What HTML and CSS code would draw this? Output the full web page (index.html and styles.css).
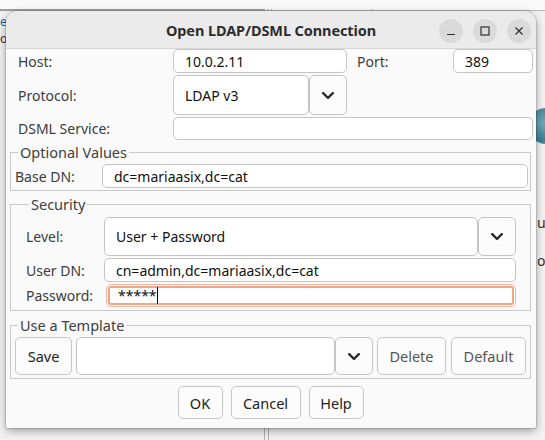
FILE: index.html
```html
<!DOCTYPE html>
<html>
<head>
<meta charset="utf-8">
<link rel="stylesheet" href="styles.css">
</head>
<body>
<div class="desktop">
  <div class="topstrip"><div class="topline-dark"></div><div class="tick t1"></div><div class="tick t2"></div><div class="tick t3"></div></div>
  <span class="bgchar bg-e">e</span>
  <span class="bgchar bg-o">o</span>
  <div class="bg-orb"></div>
  <span class="bgchar bg-u">u</span>
  <span class="bgchar bg-p">o</span>
  <div class="bg-vline v1"></div>
  <div class="bg-vline v2"></div>

  <div class="window">
    <div class="titlebar">
      <div class="title">Open LDAP/DSML Connection</div>
      <div class="wbtns">
        <span class="wbtn"><svg width="10" height="10" viewBox="0 0 10 10"><line x1="1" y1="8.5" x2="9" y2="8.5" stroke="#2e2e2e" stroke-width="1.2"/></svg></span>
        <span class="wbtn"><svg width="10" height="10" viewBox="0 0 10 10"><rect x="1" y="1" width="8" height="8" fill="none" stroke="#2e2e2e" stroke-width="1.2"/></svg></span>
        <span class="wbtn"><svg width="10" height="10" viewBox="0 0 10 10"><path d="M1.5 1.5 L8.5 8.5 M8.5 1.5 L1.5 8.5" stroke="#2e2e2e" stroke-width="1.2"/></svg></span>
      </div>
    </div>

    <div class="body">
      <div class="conn-grid">
        <span class="lbl">Host:</span>
        <div class="input">10.0.2.11</div>
        <span class="lbl port-lbl">Port:</span>
        <div class="input">389</div>

        <span class="lbl">Protocol:</span>
        <div class="combo">
          <div class="combo-text">LDAP v3</div>
          <div class="combo-btn"><svg width="12" height="8" viewBox="0 0 12 8"><polyline points="1.2,1.2 6,6 10.8,1.2" fill="none" stroke="#2b2b2b" stroke-width="2.4" stroke-linecap="round" stroke-linejoin="round"/></svg></div>
        </div>

        <span class="lbl first-col">DSML Service:</span>
        <div class="input span-all"></div>
      </div>

      <fieldset class="group grp-opt">
        <legend>Optional Values</legend>
        <div class="row-opt">
          <span class="lbl">Base DN:</span>
          <div class="input">dc=mariaasix,dc=cat</div>
        </div>
      </fieldset>

      <fieldset class="group grp-sec">
        <legend>Security</legend>
        <div class="sec-grid">
          <span class="lbl">Level:</span>
          <div class="combo">
            <div class="combo-text">User + Password</div>
            <div class="combo-btn"><svg width="12" height="8" viewBox="0 0 12 8"><polyline points="1.2,1.2 6,6 10.8,1.2" fill="none" stroke="#2b2b2b" stroke-width="2.4" stroke-linecap="round" stroke-linejoin="round"/></svg></div>
          </div>
          <span class="lbl">User DN:</span>
          <div class="input">cn=admin,dc=mariaasix,dc=cat</div>
          <span class="lbl">Password:</span>
          <div class="input focus">*****<span class="caret"></span></div>
        </div>
      </fieldset>

      <fieldset class="group grp-tpl">
        <legend>Use a Template</legend>
        <div class="tpl-row">
          <button class="btn save">Save</button>
          <div class="combo tpl-combo">
            <div class="combo-text"></div>
            <div class="combo-btn"><svg width="12" height="8" viewBox="0 0 12 8"><polyline points="1.2,1.2 6,6 10.8,1.2" fill="none" stroke="#2b2b2b" stroke-width="2.4" stroke-linecap="round" stroke-linejoin="round"/></svg></div>
          </div>
          <button class="btn dim del">Delete</button>
          <button class="btn dim def">Default</button>
        </div>
      </fieldset>

      <div class="actions">
        <button class="btn act ok">OK</button>
        <button class="btn act cancel">Cancel</button>
        <button class="btn act help">Help</button>
      </div>
    </div>
  </div>
</div>
</body>
</html>
```

FILE: styles.css
```css
* { box-sizing: border-box; }
html, body { margin: 0; padding: 0; }
body {
  width: 545px;
  height: 440px;
  overflow: hidden;
  font-family: "Noto Sans", "DejaVu Sans", sans-serif;
  font-size: 14px;
  color: #3a3a3a;
}
.desktop {
  position: relative;
  width: 545px;
  height: 440px;
  background: #f2f2f2;
  overflow: hidden;
}
.topstrip {
  position: absolute;
  left: 0; top: 0;
  width: 545px;
  height: 12px;
  background: linear-gradient(#fafafa 0 10px, #b9b9b9 10px 11px, #ececec 11px);
}
.topline-dark {
  position: absolute;
  left: 0; top: 9px;
  width: 265px; height: 2px;
  background: #9f9f9f;
}
.tick { position: absolute; top: 9px; width: 1px; height: 3px; background: #a8a8a8; }
.t1 { left: 267px; }
.t2 { left: 271px; }
.t3 { left: 372px; }
.bgchar {
  position: absolute;
  font-size: 12px;
  line-height: 12px;
  color: #333;
}
.bg-e { left: 0; top: 16px; color: #2f5f9a; }
.bg-o { left: 0; top: 33px; }
.bg-u { left: 537px; top: 215px; font-size: 14px; line-height: 16px; }
.bg-p { left: 537px; top: 253px; font-size: 14px; line-height: 16px; }
.bg-orb {
  position: absolute;
  left: 528px; top: 108px;
  width: 36px; height: 36px;
  border-radius: 50%;
  background: radial-gradient(circle at 40% 40%, #6fa9b8, #3c7f93 60%, #b9d3da 100%);
}
.bg-vline { position: absolute; top: 425px; width: 1px; height: 15px; background: #b0b0b0; }
.v1 { left: 264px; }
.v2 { left: 268px; }

.window {
  position: absolute;
  left: 6px; top: 11px;
  width: 530px; height: 417px;
  background: #fafafa;
  border-radius: 12px 12px 2px 2px;
  box-shadow: 0 0 0 1px rgba(0,0,0,0.12), 0 3px 8px rgba(0,0,0,0.35);
  display: flex;
  flex-direction: column;
  overflow: hidden;
}
.titlebar {
  height: 38px;
  flex: none;
  background: #ebebeb;
  border-bottom: 1px solid #d6d6d6;
  display: flex;
  align-items: center;
  justify-content: center;
  position: relative;
}
.title {
  font-weight: bold;
  font-size: 14.5px;
  color: #2d2d2d;
  letter-spacing: -0.1px;
}
.wbtns {
  position: absolute;
  right: 5px; top: 8px;
  display: flex;
  gap: 10px;
}
.wbtn {
  width: 24px; height: 24px;
  border-radius: 50%;
  background: #dadada;
  display: flex;
  align-items: center;
  justify-content: center;
}

.body {
  flex: 1;
  display: flex;
  flex-direction: column;
  padding: 0 5px 6px 4px;
}
.lbl {
  color: #3c3c3c;
  white-space: nowrap;
}
.input {
  background: #fff;
  border: 1px solid #c4c4c4;
  border-radius: 5px;
  padding: 0 11px;
  display: flex;
  align-items: center;
  color: #111;
  white-space: nowrap;
  overflow: hidden;
}
.combo { display: flex; }
.combo-text {
  flex: 1;
  background: #fff;
  border: 1px solid #c4c4c4;
  border-radius: 5px;
  padding: 0 11px;
  display: flex;
  align-items: center;
  color: #111;
}
.combo-btn {
  width: 38px;
  flex: none;
  background: #fcfcfc;
  border: 1px solid #c4c4c4;
  border-radius: 5px;
  display: flex;
  align-items: center;
  justify-content: center;
  padding-top: 1px;
}

.conn-grid {
  display: grid;
  grid-template-columns: 155px 174px 106px 80px;
  column-gap: 0;
  grid-template-rows: 24px 40px 23px;
  row-gap: 2px;
  margin-left: 8px;
  align-items: stretch;
}
.conn-grid .lbl { display: flex; align-items: center; }
.first-col { grid-column: 1; }
.port-lbl { padding-left: 10px; }
.span-all { grid-column: 2 / 5; }

.group {
  margin: 0;
  border: 1px solid #c9c9c9;
  border-radius: 0;
  min-width: 0;
}
.group legend {
  padding: 0 2px;
  margin-left: 3px;
  font-size: 14.5px;
  line-height: 18px;
  color: #404040;
}
.grp-opt {
  margin-top: 3px;
  padding: 3px 2px 2px 4px;
}
.row-opt {
  display: grid;
  grid-template-columns: 87px 1fr;
  height: 24px;
}
.row-opt .lbl, .sec-grid .lbl { display: flex; align-items: center; }

.grp-sec {
  margin-top: 4px;
  padding: 4px 14px 3px 15px;
}
.sec-grid {
  display: grid;
  grid-template-columns: 78px 1fr;
  grid-template-rows: 39px 24px 23px;
  row-gap: 2px;
}
.input.focus {
  border: 1px solid #efb7a2;
  box-shadow: inset 0 0 0 1px #fff, inset 0 0 0 3px #f1a487;
  margin-left: 2px;
}
.caret {
  display: inline-block;
  width: 1px;
  height: 17px;
  background: #000;
  margin-left: 0;
}

.grp-tpl {
  margin-top: 5px;
  padding: 3px 4px 3px 4px;
}
.tpl-row {
  display: flex;
  height: 38px;
}
.btn {
  font-family: inherit;
  font-size: 14.5px;
  color: #222;
  background: #fcfcfc;
  border: 1px solid #c6c6c6;
  border-radius: 5px;
  padding: 0;
  margin: 0;
  cursor: default;
}
.btn.dim { color: #555; }
.save { width: 57px; }
.tpl-combo { width: 297px; margin-left: 4px; }
.del { width: 69px; margin-left: 4px; }
.def { width: 75px; margin-left: 5px; }

.actions {
  margin-top: 7px;
  display: flex;
  justify-content: center;
  gap: 8px;
  height: 33px;
}
.ok { width: 45px; }
.cancel { width: 70px; }
.help { width: 55px; }
```
